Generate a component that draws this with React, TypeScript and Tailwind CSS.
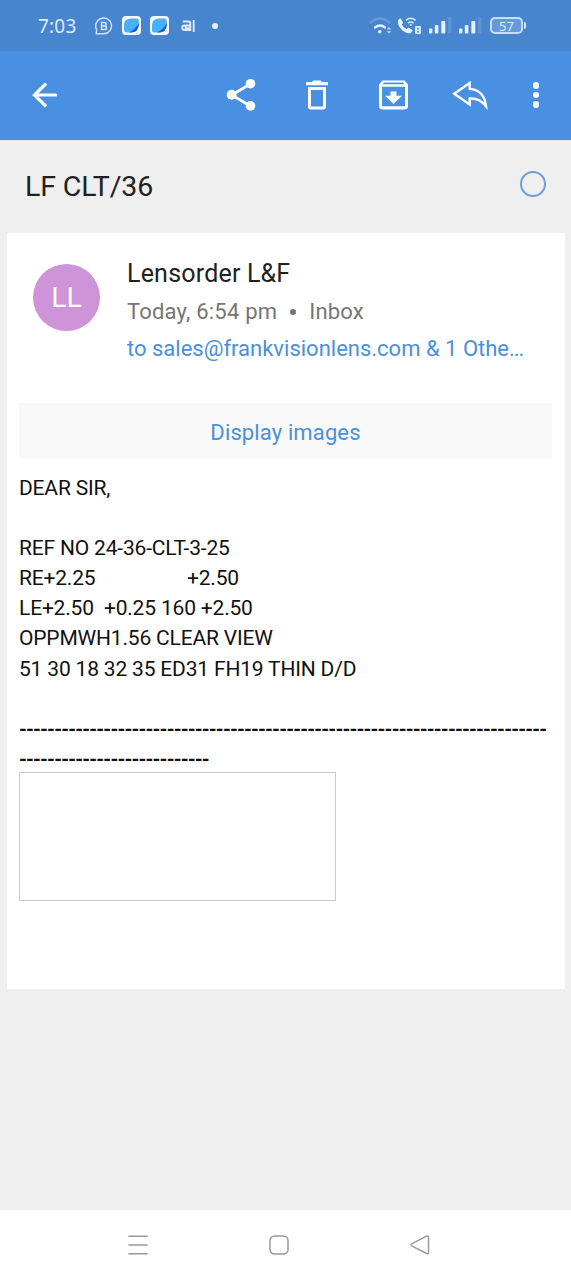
import React from "react";

function AppBadge() {
  return (
    <svg width="19" height="19" viewBox="0 0 19 19">
      <rect width="19" height="19" rx="4" fill="#f4faff" />
      <path d="M2 9Q2 2.500 9 2.500H14Q16.800 2.500 16.800 5V9Q16 16.500 9 16.500H5Q2.200 16.500 2 14Z" fill="#49b0fb" />
      <path d="M16.800 7V9Q16 16.500 9 16.500H7Q13.500 13.500 16.800 7Z" fill="#1859d6" />
    </svg>
  );
}

function Signal() {
  return (
    <svg width="23" height="17" viewBox="0 0 23 17" fill="#e2f1fd">
      <rect x="0" y="11.500" width="3.400" height="5" rx="1" />
      <rect x="5.800" y="8" width="3.600" height="8.500" rx="1" />
      <rect x="12.300" y="4" width="4" height="12.500" rx="1" />
      <rect x="19" y="0" width="3.400" height="16.500" rx="1" fill="#5d94d7" />
    </svg>
  );
}

function StatusBar() {
  return (
    <div className="flex h-[51px] items-center bg-[#4785cf] pl-[38px] text-[#dcebfa]">
      <span className="w-[57px] font-['Noto_Sans'] text-[19px] leading-[26px] tracking-[0.2px]">7:03</span>
      <svg width="18" height="18" viewBox="0 0 18 18" fill="none" stroke="#cfe4f8" strokeWidth="1.400">
        <path d="M1.300 16.800V14.500L1.700 12.800A7.900 7.900 0 1 1 9 16.800Z" />
        <path d="M6.600 5.500h2.800a1.700 1.700 0 0 1 0 3.400H6.600zM6.600 8.900h3.100a1.800 1.800 0 0 1 0 3.600H6.600z" strokeWidth="1.600" />
      </svg>
      <div className="ml-[9px] flex gap-[9px]">
        <AppBadge />
        <AppBadge />
      </div>
      <svg className="ml-[12px]" width="14" height="12" viewBox="0 0 14 12" fill="none" stroke="#dcebfa" strokeWidth="1.900">
        <path d="M12.700 0v12M1.800 1.500h5.700q1.800 0 1.800 2V11M9.300 5.500H3.500q-2.300 0-2.300 2.300T3.500 10h5.800M4.700 5.500v2.700h4.600" />
      </svg>
      <span className="ml-[17px] size-[6px] rounded-full bg-[#e5f1fc]" />
      <svg className="ml-[151px]" width="24" height="18" viewBox="0 0 24 18" fill="none" strokeLinecap="round">
        <path d="M1.500 5.500Q11 -2.500 20.500 5.500" stroke="#649ada" strokeWidth="2.200" />
        <path d="M6 10.500Q11 6.500 16 10.500" stroke="#e5f3ff" strokeWidth="2.300" />
        <circle cx="10.800" cy="14.800" r="1.800" fill="#e5f3ff" />
        <path d="M17.500 12.400 20 10 22.500 12.400zM17.500 14.200 20 16.600 22.500 14.200z" fill="#b9d6f4" />
      </svg>
      <svg className="ml-[4px]" width="25" height="18" viewBox="0 0 25 18" fill="none">
        <path d="M1 3 3.500 1.300 6.200 5.700 4.700 7.600Q6.500 11 9.700 12.200L11.500 10.500 15.700 13.200 14 16Q8.700 17 4.500 12.500 0 7.500 1 3Z" fill="#e5f3ff" />
        <path d="M9 3.400Q13.700-.8 18.600 3.400M11 6.200Q13.800 3.900 16.600 6.200" stroke="#d5e8fb" strokeWidth="1.500" />
        <circle cx="13.800" cy="8" r="1" fill="#e5f3ff" />
        <rect x="18" y="9" width="6" height="8" rx="1" fill="#d5e8fb" />
        <path d="M20 11h2v1.500h-2zM20 14h2v1.500h-2z" fill="#5c94d7" />
      </svg>
      <div className="ml-[7px] flex gap-[7px]">
        <Signal />
        <Signal />
      </div>
      <div className="ml-[8px] flex h-[17px] w-[33px] items-center justify-center rounded-[5px] border-2 border-[#c6def6] bg-[#649adb]">
        <span className="font-['Noto_Sans'] text-[13px] leading-[14px]">57</span>
      </div>
      <span className="ml-px h-[7px] w-[2px] rounded-r bg-[#d9eafb]" />
    </div>
  );
}

function Toolbar() {
  return (
    <header className="flex h-[89px] items-center bg-[#4990e2] pb-px pl-[32px] text-white">
      <svg width="26" height="26" viewBox="0 0 26 26" fill="none" stroke="currentColor" strokeWidth="3.200" strokeLinecap="round">
        <path d="M23.700 13H3M13.200 2.500 2.400 13 13.200 23.500" />
      </svg>
      <svg className="ml-[168px]" width="30" height="34" viewBox="0 0 30 34" fill="currentColor">
        <path d="M24.500 6 5.500 17 24.500 28" fill="none" stroke="currentColor" strokeWidth="2.700" />
        <circle cx="24.500" cy="5.700" r="4.800" />
        <circle cx="5.700" cy="16.800" r="5" />
        <circle cx="24.500" cy="27.900" r="4.800" />
      </svg>
      <svg className="ml-[50px]" width="22" height="30" viewBox="0 0 22 30" fill="currentColor">
        <path d="M0 2h6l1.500-1.500h7L16 2h6v3.300H0z" />
        <path d="M2 7h18v19.500a3 3 0 0 1-3 3H5a3 3 0 0 1-3-3zM5 10v16.500h12V10z" fillRule="evenodd" />
      </svg>
      <svg className="ml-[51px]" width="29" height="30" viewBox="0 0 29 30" fill="currentColor">
        <path d="M3.500.5h22L29 4.500V26a3.500 3.500 0 0 1-3.500 3.500h-22A3.500 3.500 0 0 1 0 26V4.500zM5 2.600 3.700 4.200h21.600L24 2.600zM3 6.800v19.500h23V6.800z" fillRule="evenodd" />
        <path d="M11.500 11.500h6v4.300H23L14.500 24 6 15.800h5.500z" />
      </svg>
      <svg className="ml-[43.5px]" width="37" height="30" viewBox="0 0 37 30" fill="none" stroke="currentColor" strokeWidth="2.400">
        <path d="M17.700 3 2.200 13.800 17.700 24.500V18.500C24.500 18 29.500 20.500 34 26.200 32.800 15.500 28 9.700 17.700 8.900Z" />
      </svg>
      <div className="ml-[44px] flex flex-col gap-[3px]">
        <i className="size-[6.5px] rounded-full bg-white" />
        <i className="size-[6.5px] rounded-full bg-white" />
        <i className="size-[6.5px] rounded-full bg-white" />
      </div>
    </header>
  );
}

const dashes = (count: number) => "-".repeat(count);

function Message() {
  return (
    <article className="mx-[6.5px] h-[756px] bg-white px-[12.5px] pt-[23px]">
      <div className="flex h-[147px] pl-[14px]">
        <div className="mt-[8px] flex size-[67px] shrink-0 items-center justify-center rounded-full bg-[#ce93d8] text-[28.5px] text-white">
          <span className="relative top-px">LL</span>
        </div>
        <div className="ml-[27px] whitespace-nowrap">
          <p className="text-[25px] leading-[36px] tracking-[0.2px] text-[#212121]">Lensorder L&amp;F</p>
          <div className="flex items-center text-[22px] leading-[40px] tracking-[0.2px] text-[#757575]">
            <span>Today, 6:54 pm</span>
            <span className="mr-[13px] ml-[13px] size-[6px] rounded-full bg-[#757575]" />
            <span>Inbox</span>
          </div>
          <p className="text-[22px] leading-[34px] text-[#4a90d9]">to sales@frankvisionlens.com &amp; 1 Othe<span className="tracking-[-1px]">...</span></p>
        </div>
      </div>
      <button className="block h-[55px] w-full bg-[#f9f9f9] text-[22px] tracking-[0.13px] text-[#4a90d9]">
        <span className="relative top-[2px]">Display images</span>
      </button>
      <div className="mt-[15px] text-[21px] leading-[30.1px] tracking-[-0.18px] whitespace-pre text-[#111]">
        <p>DEAR SIR,</p>
        <p>{" "}</p>
        <p>REF NO 24-36-CLT-3-25</p>
        <p className="flex"><span className="w-[168px]">RE+2.25</span><span>+2.50</span></p>
        <p>{"LE+2.50  +0.25 160 +2.50"}</p>
        <p>OPPMWH1.56 CLEAR VIEW</p>
        <p>51 30 18 32 35 ED31 FH19 THIN D/D</p>
        <p>{" "}</p>
        <div className="text-[20px] font-bold tracking-[-0.85px]">
          <p>{dashes(75)}</p>
          <p>{dashes(27)}</p>
        </div>
      </div>
      <div className="-mt-[2px] h-[129px] w-[317px] border border-[#cacaca]" />
    </article>
  );
}

function NavigationBar() {
  return (
    <nav className="flex h-[70px] items-center bg-white pl-[128px]">
      <svg width="20" height="20" viewBox="0 0 20 20" stroke="#999" strokeWidth="1.500">
        <path d="M.3 1.200h19.400M.3 10h19.400M.3 18.700h19.400" />
      </svg>
      <svg className="ml-[121px]" width="20" height="20" viewBox="0 0 20 20" fill="none" stroke="#999" strokeWidth="1.500">
        <rect x="1" y="1" width="18" height="18" rx="4.500" />
      </svg>
      <svg className="ml-[121px]" width="20" height="20" viewBox="0 0 20 20" fill="none" stroke="#999" strokeWidth="1.500">
        <path d="M1.700 8.800 16.500 1.200Q18.500.3 18.500 2.500V17.500Q18.500 19.400 16.700 18.500L1.700 10.900Q.4 9.900 1.700 8.800Z" />
      </svg>
    </nav>
  );
}

export default function App() {
  return (
    <main className="flex h-[1280px] w-[571px] flex-col overflow-hidden bg-[#efefef] font-[Roboto,sans-serif]">
      <StatusBar />
      <Toolbar />
      <div className="flex h-[93px] items-center justify-between border-t border-[#dceafa] pr-[25px] pl-[25px]">
        <h1 className="text-[28.5px] tracking-[-0.1px] text-[#212121]">LF CLT/36</h1>
        <span className="mb-[6px] size-[26px] rounded-full border-2 border-[#6ba0df]" />
      </div>
      <Message />
      <div className="flex-1" />
      <NavigationBar />
    </main>
  );
}
